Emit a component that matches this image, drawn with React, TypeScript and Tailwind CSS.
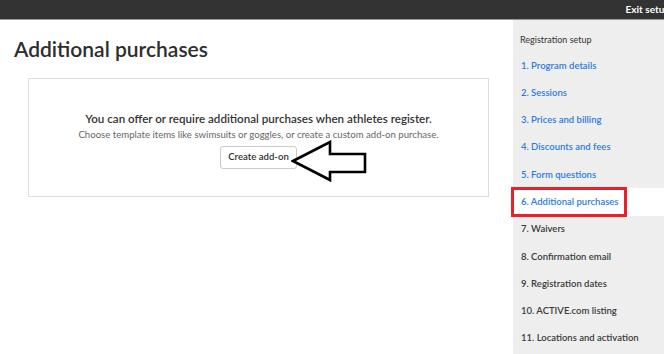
import React from 'react';

const steps = [
  { label: '1. Program details', done: true },
  { label: '2. Sessions', done: true },
  { label: '3. Prices and billing', done: true },
  { label: '4. Discounts and fees', done: true },
  { label: '5. Form questions', done: true },
  { label: '6. Additional purchases', done: true, active: true },
  { label: '7. Waivers' },
  { label: '8. Confirmation email' },
  { label: '9. Registration dates' },
  { label: '10. ACTIVE.com listing' },
  { label: '11. Locations and activation' },
];

function Arrow() {
  return (
    <svg className="absolute left-[262px] top-[61px]" width="80" height="44" viewBox="0 0 80 44">
      <path
        d="M2 21 L39 2 L39 14 L74 14 L74 32 L39 32 L39 40 Z"
        fill="white"
        stroke="black"
        strokeWidth="2.6"
        strokeLinejoin="miter"
      />
    </svg>
  );
}

export default function App() {
  return (
    <div className="w-[664px] h-[354px] overflow-hidden bg-white font-['Lato',sans-serif]">
      <div className="w-[690px]">
        <div className="h-[20px] bg-[#333333] border-b border-[#9a9a9a] flex items-center justify-end pr-[20px]">
          <span className="text-white text-[10px] font-bold">Exit setup</span>
        </div>
        <div className="flex">
          <div className="w-[513px] shrink-0">
            <h1 className="pl-[14px] pt-[16px] text-[21px] leading-[26px] font-semibold text-[#2d2d2d]">
              Additional purchases
            </h1>
            <div className="relative ml-[28px] mt-[16px] w-[461px] h-[119px] border border-[#dddddd] flex flex-col items-center pt-[32px]">
              <p className="text-[11.6px] leading-[15px] font-semibold text-[#333333]">
                You can offer or require additional purchases when athletes register.
              </p>
              <p className="mt-[2px] text-[9.6px] leading-[14px] text-[#666666]">
                Choose template items like swimsuits or goggles, or create a custom add-on purchase.
              </p>
              <button className="mt-[4px] h-[23px] px-[7px] border border-[#cccccc] rounded-[3px] text-[9.6px] font-semibold text-[#333333] bg-white">
                Create add-on
              </button>
              <Arrow />
            </div>
          </div>
          <div className="w-[177px] shrink-0 h-[334px] bg-[#eeeeee] pt-[13px]">
            <div className="h-[14px] pl-[7px] flex items-center text-[9px] text-[#333333]">Registration setup</div>
            <div className="mt-[5px]">
              {steps.map((s) => (
                <div
                  key={s.label}
                  className={`relative h-[27.3px] flex items-center pl-[8px] text-[9.5px] font-semibold ${
                    s.active ? 'bg-white' : ''
                  } ${s.done ? 'text-[#2c7be0]' : 'text-[#3a3a3a]'}`}
                >
                  {s.label}
                  {s.active && (
                    <div className="absolute -left-[2px] -top-[1px] w-[116px] h-[30px] border-[3px] border-[#e8202a]" />
                  )}
                </div>
              ))}
            </div>
          </div>
        </div>
      </div>
    </div>
  );
}
